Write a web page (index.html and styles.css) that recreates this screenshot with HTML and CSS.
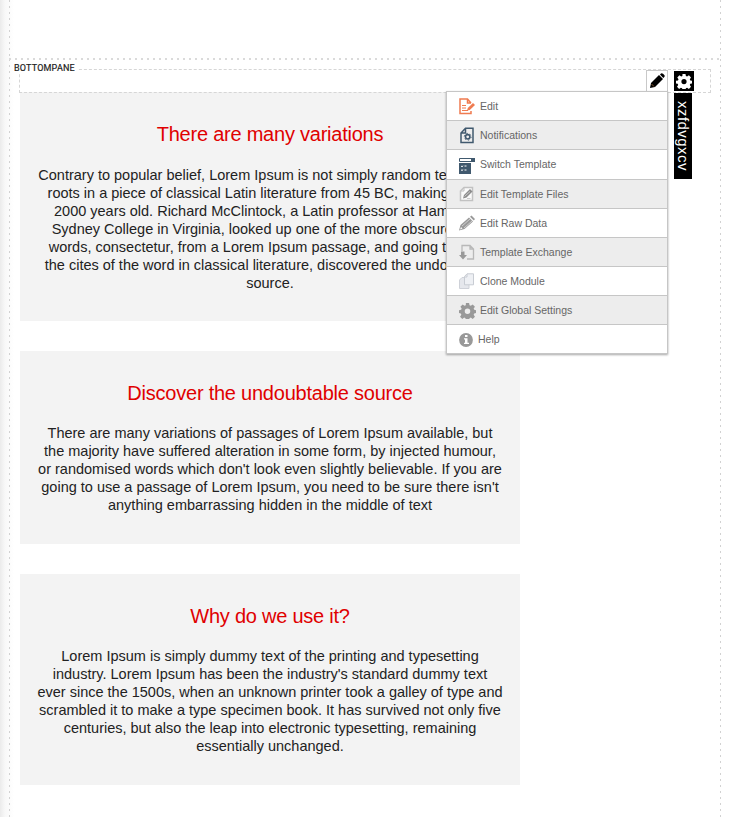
FILE: index.html
```
<!DOCTYPE html>
<html lang="en">
<head>
<meta charset="utf-8">
<title>Page editor</title>
<link rel="stylesheet" href="styles.css">
</head>
<body>
<div class="page">
  <div class="upper-pane"></div>
  <main class="bottom-pane">
    <span class="pane-name">BOTTOMPANE</span>
    <div class="toolbar">
      <div class="pencil"><svg width="16" height="16" viewBox="0 0 16 16"><path d="M1 15l1-5 8-8 4 4-8 8z" fill="#000"/><path d="M11 1.5l1-1q1-.7 2 .3l1.3 1.3q.8 1 0 1.800l-1 1z" fill="#000"/><path d="M2.500 11l2.500 2.500" stroke="#a56b35" stroke-width=".8"/></svg></div>
      <div class="gear"><svg width="16" height="16" viewBox="0 0 16 16"><g fill="#fff"><path id="cog" fill-rule="evenodd" d="M6.500 1h3l.4 2 1.200.5 1.800-1.200 2.100 2.100-1.200 1.800.5 1.200 2 .4v2.600l-2 .4-.5 1.200 1.200 1.800-2.100 2.100-1.800-1.200-1.200.5-.4 2h-3l-.4-2-1.200-.5-1.800 1.200L1 13.800l1.200-1.800-.5-1.200-1.700-.4V7.800l2-.4.5-1.200-1.200-1.800 2.100-2.100 1.800 1.200 1.200-.5zM8 6a2.600 2.600 0 1 0 0 5.200A2.600 2.600 0 0 0 8 6z"/></g></svg></div>
      <div class="module-name">xzfdvgxcv</div>
      <ul class="menu">
        <li><svg width="17" height="17" viewBox="0 0 17 17"><path d="M12 5L8.500 1H1v14.500h11V13M8.500 1v4H12" fill="none" stroke="#ef7b50" stroke-width="1.500"/><path d="M3 7.500h4M3 10h4M3 12.500h6" stroke="#ef7b50"/><path d="M8 12.500l.8-2.500L14 5l2 2-5.200 5z" fill="#ef7b50"/></svg>Edit</li>
        <li><svg width="17" height="17" viewBox="0 0 17 17"><path d="M6.500 1.200H14v14.300H2V6zM6.500 1.200V6H2" fill="none" stroke="#40596e" stroke-width="1.500"/><circle cx="8.700" cy="9.800" r="2.200" fill="none" stroke="#40596e" stroke-width="1.600"/><circle cx="8.700" cy="9.800" r="3.400" fill="none" stroke="#40596e" stroke-width="1" stroke-dasharray="1.400 2.160"/></svg>Notifications</li>
        <li><svg width="17" height="17" viewBox="0 0 17 17"><path d="M.5 1.500h15v3H.5z" fill="#fff" stroke="#40596e"/><path d="M12 1h4v4h-4zM0 6h12v11H0z" fill="#40596e"/><path d="M2 9l1 .7L4.200 8.800M5.500 9h2M2 12.800l1 .7 1.200-.9M5.500 13h2" fill="none" stroke="#fff"/></svg>Switch Template</li>
        <li><svg width="17" height="17" viewBox="0 0 17 17"><path d="M5 1.500h8.500v13H1.500V5z" fill="#fafafa" stroke="#c2c2c2" stroke-width="1.500"/><path d="M5 2v3H2" fill="none" stroke="#c2c2c2"/><path d="M4 12.500l1-3.500 6-6 2.500 2.500-6 6z" fill="#8c8c8c"/><path d="M5.500 10.500l5.500-5M8 12.500h3.500" stroke="#ccc"/></svg>Edit Template Files</li>
        <li><svg width="17" height="17" viewBox="0 0 17 17"><path d="M0 15.500l1.500-5.500L10 2.500l4 4L5.500 14zM11 1.700l1.500-1.200 3.500 3.500-1.200 1.500z" fill="#999"/><path d="M3 11l8-7M5 13l8-7" stroke="#ddd" stroke-width=".8"/><path d="M2 12l1.500 1.500L1 14.500z" fill="#fff"/></svg>Edit Raw Data</li>
        <li><svg width="17" height="17" viewBox="0 0 17 17"><path d="M3 7V1.500h8l3.500 3.500v10H8M11 1.500V5h3.500" fill="none" stroke="#b8b8b8" stroke-width="1.300"/><path d="M2 7.500h3.500V11H8l-4 4.500L0 11h2z" fill="#999"/></svg>Template Exchange</li>
        <li><svg width="17" height="17" viewBox="0 0 17 17"><path d="M3 4.500h7v11H.5V7z" fill="#e5e7ec" stroke="#ced1d8"/><path d="M8 .8h6.500v11h-9V3.500z" fill="#eef0f4" stroke="#c8ccd3"/><path d="M8 1v3H5.500" fill="none" stroke="#c8ccd3"/></svg>Clone Module</li>
        <li><svg width="17" height="17" viewBox="0 0 16 16"><use href="#cog" fill="#999"/></svg>Edit Global Settings</li>
        <li class="help"><svg width="15" height="17" viewBox="0 0 15 17"><circle cx="7" cy="9" r="6.900" fill="#999"/><path d="M6 4h2.500v2H6zM5 7.200h3.500v4.500H10v1.300H5v-1.300h1V8.500H5z" fill="#fff"/></svg>Help</li>
      </ul>
    </div>
    <section class="card first">
      <h2>There are many variations</h2>
      <p>Contrary to popular belief, Lorem Ipsum is not simply random text. It has<br>roots in a piece of classical Latin literature from 45 BC, making it over<br>2000 years old. Richard McClintock, a Latin professor at Hampden-<br>Sydney College in Virginia, looked up one of the more obscure Latin<br>words, consectetur, from a Lorem Ipsum passage, and going through<br>the cites of the word in classical literature, discovered the undoubtable<br>source.</p>
    </section>
    <section class="card">
      <h2>Discover the undoubtable source</h2>
      <p>There are many variations of passages of Lorem Ipsum available, but<br>the majority have suffered alteration in some form, by injected humour,<br>or randomised words which don't look even slightly believable. If you are<br>going to use a passage of Lorem Ipsum, you need to be sure there isn't<br>anything embarrassing hidden in the middle of text</p>
    </section>
    <section class="card">
      <h2>Why do we use it?</h2>
      <p>Lorem Ipsum is simply dummy text of the printing and typesetting<br>industry. Lorem Ipsum has been the industry's standard dummy text<br>ever since the 1500s, when an unknown printer took a galley of type and<br>scrambled it to make a type specimen book. It has survived not only five<br>centuries, but also the leap into electronic typesetting, remaining<br>essentially unchanged.</p>
    </section>
  </main>
</div>
</body>
</html>
```
FILE: styles.css
```
* { box-sizing: border-box; }
body { margin: 0; background: #fff; font-family: "Liberation Sans", Arial, sans-serif; }
.page {
  height: 817px;
  padding: 0 8px 0 9px;
  overflow: hidden;
  background: linear-gradient(90deg, #ebebeb, #f8f8f8 5px, #fff 14px);
}
.upper-pane, .bottom-pane {
  width: 712px;
  background:
    repeating-linear-gradient(180deg, #d2d2d2 0 2px, transparent 2px 6px) 0 0 / 1px 100% no-repeat,
    repeating-linear-gradient(180deg, #d2d2d2 0 2px, transparent 2px 6px) 100% 0 / 1px 100% no-repeat;
}
.upper-pane { height: 58px; }
.bottom-pane {
  position: relative;
  height: 759px;
  padding: 11px 9px 0 10px;
  background:
    repeating-linear-gradient(90deg, #dadada 0 2px, transparent 2px 6px) 0 0 / 100% 2px no-repeat,
    repeating-linear-gradient(180deg, #d2d2d2 0 2px, transparent 2px 6px) 0 1px / 1px 100% no-repeat,
    repeating-linear-gradient(180deg, #d2d2d2 0 2px, transparent 2px 6px) 100% 1px / 1px 100% no-repeat;
}
.pane-name {
  position: absolute;
  z-index: 1;
  left: 5px;
  top: 5px;
  padding-right: 3px;
  background: #fff;
  font: 9px/10px Roboto, sans-serif;
  letter-spacing: .2px;
  color: #222;
  -webkit-text-stroke: .2px #222;
}
.toolbar {
  position: relative;
  display: flex;
  justify-content: flex-end;
  width: 692px;
  height: 24px;
  margin-bottom: -1px;
  padding-right: 16px;
  border: 1px dashed #d6d6d6;
}
.pencil {
  width: 22px;
  height: 22px;
  margin-right: 6px;
  padding: 2px;
  background: #fff;
  border: 1px solid #c9c9c9;
  border-bottom: 0;
}
.gear { width: 20px; height: 20px; margin-top: 1px; padding: 2px; background: #000; }
.pencil svg, .gear svg { display: block; }
.module-name {
  position: absolute;
  z-index: 2;
  left: 654px;
  top: 23px;
  width: 18px;
  height: 86px;
  padding-top: 8px;
  writing-mode: vertical-rl;
  background: #000;
  color: #fff;
  font-size: 15px;
  letter-spacing: .45px;
  line-height: 18px;
  white-space: nowrap;
}
.menu {
  position: absolute;
  z-index: 1;
  left: 426px;
  top: 21px;
  width: 222px;
  margin: 0;
  padding: 0;
  list-style: none;
  border: 1px solid #c6c6c6;
  border-bottom: 0;
  background: #fff;
  box-shadow: 0 1px 2px rgba(0, 0, 0, .35);
}
.menu li {
  display: flex;
  align-items: center;
  gap: 4px;
  height: 29px;
  padding: 0 0 1px 12px;
  border-bottom: 1px solid #c6c6c6;
  color: #666;
  font-size: 10.5px;
}
.menu li svg { position: relative; top: 1px; }
.menu li:nth-child(even) { background: #ededed; }
.menu li:nth-child(3) { height: 30px; }
.card {
  width: 500px;
  margin: 0 0 30px 1px;
  padding: 31px 0 30px;
  background: #f3f3f3;
  text-align: center;
  white-space: nowrap;
}
.card h2 {
  margin: 0 0 19px;
  color: #e00000;
  font-size: 20px;
  letter-spacing: -.23px;
  line-height: 23px;
  font-weight: 400;
}
.card.first { padding-bottom: 29px; }
.card.first h2 { margin-bottom: 20px; }
.card p { margin: 0; color: #222; font-size: 14.5px; line-height: 18px; }
```
